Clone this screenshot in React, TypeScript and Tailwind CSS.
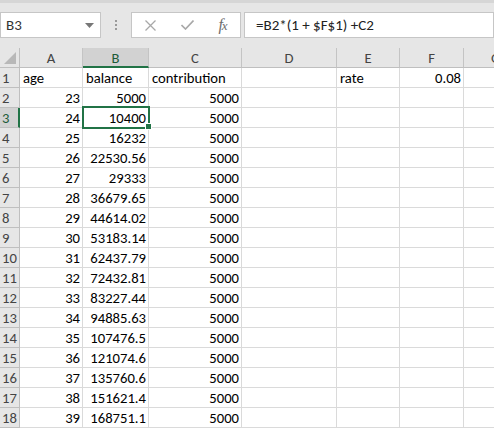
import React from "react";

const font = "font-['Carlito','Calibri','Liberation_Sans',sans-serif]";

const balances = [
  "5000",
  "10400",
  "16232",
  "22530.56",
  "29333",
  "36679.65",
  "44614.02",
  "53183.14",
  "62437.79",
  "72432.81",
  "83227.44",
  "94885.63",
  "107476.5",
  "121074.6",
  "135760.6",
  "151621.4",
  "168751.1",
];

const colLetters = ["A", "B", "C", "D", "E", "F", "G"];

type Row = { cells: (string | number)[] };

const rows: Row[] = [
  { cells: ["age", "balance", "contribution", "", "rate", 0.08, ""] },
  ...balances.map((b, i) => ({
    cells: [23 + i, b, 5000, "", "", "", ""],
  })),
];

const Cell = ({ value, row }: { value: string | number; row: number }) => {
  // numbers right aligned, text left, like excel default
  const isNum = typeof value === "number" || (row > 1 && value !== "" && !isNaN(Number(value)));
  return (
    <div
      className={`h-[20px] border-r border-b border-[#dadada] bg-white text-[14.67px] leading-[21px] text-black overflow-hidden whitespace-nowrap ${
        isNum ? "text-right pr-[2px]" : "text-left pl-[3px]"
      }`}
    >
      {value}
    </div>
  );
};

const FormulaBar = () => (
  <div className="h-[48px] bg-[#e6e6e6] border-t-[3px] border-[#d6d6d6] flex items-start pt-[9px]">
    <div className="w-[101px] h-[26px] bg-white border border-[#c6c6c6] flex items-center justify-between pl-[5px] pr-[6px]">
      <span className="text-[15px] text-[#333]">B3</span>
      <svg width="9" height="5" viewBox="0 0 9 5">
        <path d="M0 0 H9 L4.5 5 Z" fill="#777" />
      </svg>
    </div>
    <div className="w-[30px] h-[26px] flex flex-col items-center justify-center gap-[2px]">
      <span className="w-[2px] h-[2px] bg-[#9a9a9a]" />
      <span className="w-[2px] h-[2px] bg-[#9a9a9a]" />
      <span className="w-[2px] h-[2px] bg-[#9a9a9a]" />
    </div>
    <div className="w-[110px] h-[26px] bg-white border border-[#c6c6c6] flex items-center">
      <div className="w-[37px] flex justify-center">
        <svg width="11" height="11" viewBox="0 0 11 11">
          <path d="M0.5 0.5 L10.5 10.5 M10.5 0.5 L0.5 10.5" stroke="#a8a8a8" strokeWidth="1.3" />
        </svg>
      </div>
      <div className="w-[36px] flex justify-center">
        <svg width="13" height="10" viewBox="0 0 13 10">
          <path d="M0.5 5 L4.5 9 L12.5 0.5" stroke="#a8a8a8" strokeWidth="1.6" fill="none" />
        </svg>
      </div>
      <div className="w-[35px] flex justify-center">
        <span className="font-['Liberation_Serif',serif] italic text-[16px] text-[#6e6e6e] tracking-[-1px]">
          f<span className="text-[13px]">x</span>
        </span>
      </div>
    </div>
    <div className="ml-[3px] flex-1 h-[26px] bg-white border border-[#c6c6c6] flex items-center pl-[11px]">
      <span className="text-[15px] text-[#222]">=B2*(1 + $F$1) +C2</span>
    </div>
  </div>
);

const App = () => {
  return (
    <div className={`w-[494px] h-[428px] overflow-hidden bg-white ${font}`}>
      <FormulaBar />
      <div className="relative w-[528px]">
        <div className="grid grid-cols-[20px_63px_66px_93px_95px_63px_64px_64px]">
          {/* corner */}
          <div className="h-[20px] bg-[#e6e6e6] border-r border-b border-[#bfbfbf] flex items-end justify-end pr-[3px] pb-[3px]">
            <svg width="12" height="12" viewBox="0 0 12 12">
              <path d="M12 0 V12 H0 Z" fill="#b8b8b8" />
            </svg>
          </div>
          {colLetters.map((c) => (
            <div
              key={c}
              className={`h-[20px] text-center text-[14.67px] leading-[21px] border-r border-[#c4c4c4] ${
                c === "B"
                  ? "bg-[#d2d2d2] text-[#1d5c39] border-b-2 border-b-[#217346]"
                  : "bg-[#e6e6e6] text-[#444] border-b border-b-[#bfbfbf]"
              }`}
            >
              {c}
            </div>
          ))}

          {rows.map((r, i) => (
            <React.Fragment key={i}>
              <div
                className={`h-[20px] text-[14.67px] leading-[21px] pl-[2px] border-b ${
                  i === 2
                    ? "bg-[#d2d2d2] text-[#1d5c39] border-r-2 border-r-[#217346] border-b-[#bfbfbf]"
                    : "bg-[#e6e6e6] text-[#444] border-r border-[#bfbfbf]"
                }`}
              >
                {i + 1}
              </div>
              {r.cells.map((v, j) => (
                <Cell key={j} value={v} row={i + 1} />
              ))}
            </React.Fragment>
          ))}
        </div>

        {/* active cell B3 */}
        <div className="absolute left-[82px] top-[58px] w-[68px] h-[23px] border-2 border-[#217346] pointer-events-none" />
        <div className="absolute left-[145px] top-[75px] w-[7px] h-[7px] bg-[#217346] border border-white" />
      </div>
    </div>
  );
};

export default App;
